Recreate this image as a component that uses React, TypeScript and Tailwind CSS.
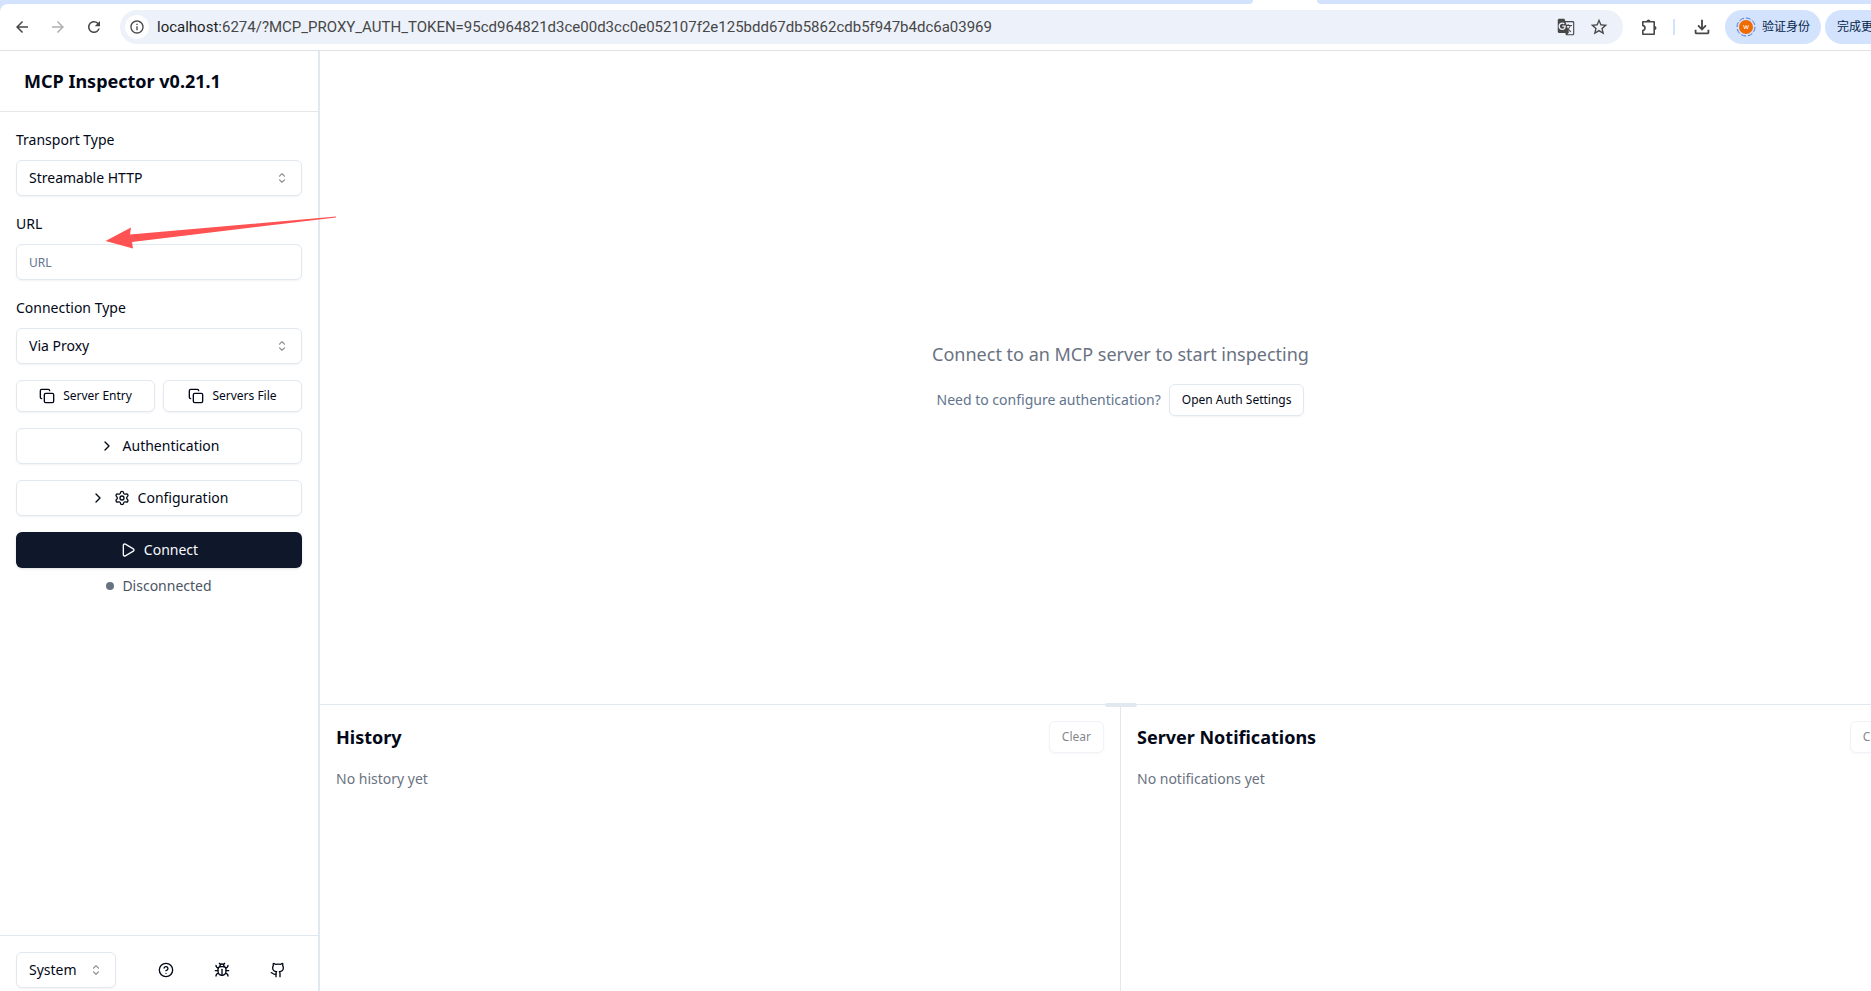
import { useState } from "react";
import type { ReactNode, SelectHTMLAttributes } from "react";
import { Bug, ChevronRight, CircleHelp, Copy, Github, Play, Settings } from "lucide-react";
import {
    MdArrowBack,
    MdArrowForward,
    MdGTranslate,
    MdInfoOutline,
    MdOutlineFileDownload,
    MdRefresh,
    MdStarOutline,
} from "react-icons/md";

const TOKEN = "95cd964821d3ce00d3cc0e052107f2e125bdd67db5862cdb5f947b4dc6a03969";

const outline = "rounded-md border border-slate-200 bg-white shadow-xs";

function SortIcon() {
    return (
        <svg
            viewBox="0 0 15 15"
            className="pointer-events-none col-start-1 row-start-1 mr-3 size-4 justify-self-end opacity-50"
            fill="none"
            stroke="currentColor"
            strokeLinecap="round"
            strokeLinejoin="round"
        >
            <path d="M5.2 5.8 7.5 3.5l2.3 2.3M5.2 9.2l2.3 2.3 2.3-2.3" />
        </svg>
    );
}

function PuzzleIcon() {
    return (
        <svg viewBox="0 0 20 20" className="size-5" fill="none" stroke="currentColor" strokeWidth="1.6">
            <path
                d="M3.8 4.8h11.4v12.4H3.8v-3.6c1.3-.3 2.2-1.3 2.2-2.6s-.9-2.3-2.2-2.6Z"
                strokeLinejoin="round"
            />
            <path d="M7.5 4.5a2 2 0 0 1 4 0ZM15.5 9a2 2 0 0 1 0 4Z" fill="currentColor" stroke="none" />
        </svg>
    );
}

function Select({ children, ...props }: SelectHTMLAttributes<HTMLSelectElement>) {
    return (
        <div className="grid items-center">
            <select
                {...props}
                className={`${outline} col-start-1 row-start-1 h-9 w-full appearance-none px-3 text-sm`}
            >
                {children}
            </select>
            <SortIcon />
        </div>
    );
}

function Field({ id, label, children }: { id: string; label: string; children: ReactNode }) {
    return (
        <div className="flex flex-col gap-2">
            <label htmlFor={id} className="text-sm leading-6">
                {label}
            </label>
            {children}
        </div>
    );
}

function BrowserBar() {
    return (
        <header className="bg-[#d3e3fd]">
            <div className="flex h-1 bg-white">
                <div className="w-[1253px] rounded-br-full bg-[#d3e3fd]" />
                <div className="ml-16 flex-1 rounded-bl-full bg-[#d3e3fd]" />
            </div>
            <div className="flex h-[47px] items-center rounded-tl-lg border-b border-[#dfe1e5] bg-white pl-3 text-[#474747]">
                <button aria-label="Back" className="mr-4 p-px">
                    <MdArrowBack size={18} />
                </button>
                <button aria-label="Forward" disabled className="mr-4 p-px text-[#b0b0b0]">
                    <MdArrowForward size={18} />
                </button>
                <button aria-label="Reload" className="mr-4 p-px">
                    <MdRefresh size={18} />
                </button>
                <div className="flex h-[34px] min-w-0 flex-1 items-center rounded-full bg-[#ecf1fa] pr-3.5 pl-[5px]">
                    <button
                        aria-label="Site information"
                        className="mr-2 flex size-6 items-center justify-center rounded-full bg-white"
                    >
                        <MdInfoOutline size={16} />
                    </button>
                    <p className="flex-1 truncate font-[Roboto,sans-serif] text-[15px]">
                        <span className="text-[#1f1f1f]">localhost:</span>
                        6274/?MCP_PROXY_AUTH_TOKEN={TOKEN}
                    </p>
                    <button aria-label="Translate" className="mr-3.5">
                        <MdGTranslate size={18} />
                    </button>
                    <button aria-label="Bookmark">
                        <MdStarOutline size={20} />
                    </button>
                </div>
                <button aria-label="Extensions" className="ml-4">
                    <PuzzleIcon />
                </button>
                <div className="mr-4 ml-3.5 h-4 w-0.5 bg-[#d3e3fd]" />
                <button aria-label="Downloads" className="mr-3">
                    <MdOutlineFileDownload size={22} />
                </button>
                <button className="flex h-[34px] w-24 items-center justify-center gap-1.5 rounded-full bg-[#d3e3fd] text-xs text-[#041e49]">
                    <svg viewBox="0 0 20 20" className="size-5">
                        <circle cx="10" cy="10" r="9" fill="none" stroke="#4f78c4" strokeDasharray="5 2" />
                        <circle cx="10" cy="10" r="7" fill="#f06a00" />
                        <path d="m7.5 8 1.2 4L10 8.5l1.3 3.5 1.2-4" fill="none" stroke="#fff" strokeWidth=".8" />
                    </svg>
                    验证身份
                </button>
                <button className="ml-1 h-[34px] w-24 rounded-full bg-[#d3e3fd] pl-3 text-left text-xs whitespace-nowrap text-[#041e49]">
                    完成更新
                </button>
            </div>
        </header>
    );
}

function Sidebar() {
    const [url, setUrl] = useState("");

    return (
        <aside className="flex w-80 shrink-0 flex-col border-r-2 border-slate-200">
            <div className="border-b border-gray-200 p-4">
                <h1 className="ml-2 text-lg font-bold">MCP Inspector v0.21.1</h1>
            </div>

            <div className="flex flex-1 flex-col gap-4 p-4">
                <Field id="transport" label="Transport Type">
                    <Select id="transport" defaultValue="http">
                        <option value="stdio">STDIO</option>
                        <option value="sse">SSE</option>
                        <option value="http">Streamable HTTP</option>
                    </Select>
                </Field>
                <Field id="url" label="URL">
                    <input
                        id="url"
                        value={url}
                        onChange={(e) => setUrl(e.target.value)}
                        placeholder="URL"
                        className={`${outline} h-9 px-3 text-xs placeholder:text-slate-500`}
                    />
                </Field>
                <Field id="connection" label="Connection Type">
                    <Select id="connection" defaultValue="proxy">
                        <option value="proxy">Via Proxy</option>
                        <option value="direct">Direct</option>
                    </Select>
                </Field>

                <div className="grid grid-cols-2 gap-2">
                    <button className={`${outline} flex h-8 items-center justify-center gap-2 text-xs`}>
                        <Copy size={16} />
                        Server Entry
                    </button>
                    <button className={`${outline} flex h-8 items-center justify-center gap-2 text-xs`}>
                        <Copy size={16} />
                        Servers File
                    </button>
                </div>

                <button className={`${outline} flex h-9 items-center justify-center gap-2 text-sm`}>
                    <ChevronRight size={16} />
                    Authentication
                </button>
                <button className={`${outline} flex h-9 items-center justify-center gap-2 text-sm`}>
                    <ChevronRight size={16} />
                    <Settings size={16} />
                    Configuration
                </button>

                <div className="flex flex-col gap-2">
                    <button className="flex h-9 items-center justify-center gap-2 rounded-md bg-slate-900 text-sm text-slate-50 shadow-sm">
                        <Play size={16} />
                        Connect
                    </button>
                    <div className="flex items-center justify-center gap-2 text-sm text-gray-600">
                        <span className="size-2 rounded-full bg-gray-500" />
                        Disconnected
                    </div>
                </div>
            </div>

            <div className="flex items-center justify-between border-t border-slate-200 p-4">
                <div className="w-[100px]">
                    <Select aria-label="Theme" defaultValue="system">
                        <option value="system">System</option>
                        <option value="light">Light</option>
                        <option value="dark">Dark</option>
                    </Select>
                </div>
                <nav className="flex gap-2">
                    <a href="#docs" aria-label="Documentation" className="px-4 py-2">
                        <CircleHelp size={16} />
                    </a>
                    <a href="#debug" aria-label="Debugging guide" className="px-4 py-2">
                        <Bug size={16} />
                    </a>
                    <a href="#github" aria-label="GitHub" className="px-4 py-2">
                        <Github size={16} />
                    </a>
                </nav>
            </div>
        </aside>
    );
}

function LogPanel({ title, empty }: { title: string; empty: string }) {
    return (
        <div className="p-4">
            <div className="mb-4 flex items-center justify-between">
                <h2 className="text-lg font-bold">{title}</h2>
                <button disabled className={`${outline} h-8 px-3 text-xs opacity-50`}>
                    Clear
                </button>
            </div>
            <p className="text-sm text-gray-500">{empty}</p>
        </div>
    );
}

export default function App() {
    return (
        <div className="relative h-screen overflow-hidden bg-white font-['Noto_Sans','Noto_Sans_CJK_SC',sans-serif] text-[#020817]">
            <div className="flex h-[calc(100%+13px)] w-[calc(100%+50px)] flex-col">
                <BrowserBar />
                <div className="flex min-h-0 flex-1">
                    <Sidebar />
                    <main className="flex flex-1 flex-col">
                        <section className="flex flex-1 flex-col items-center justify-center gap-4">
                            <p className="text-lg text-gray-500">Connect to an MCP server to start inspecting</p>
                            <div className="flex items-center gap-2">
                                <p className="text-sm text-slate-500">Need to configure authentication?</p>
                                <button className={`${outline} h-8 px-3 text-xs`}>Open Auth Settings</button>
                            </div>
                        </section>
                        <section className="relative flex h-[300px] border-t border-slate-200">
                            <div className="absolute -top-0.5 left-1/2 h-1 w-8 -translate-x-1/2 cursor-row-resize rounded-full bg-slate-200" />
                            <div className="flex-1 border-r border-slate-200">
                                <LogPanel title="History" empty="No history yet" />
                            </div>
                            <div className="flex-1">
                                <LogPanel title="Server Notifications" empty="No notifications yet" />
                            </div>
                        </section>
                    </main>
                </div>
            </div>

            <svg viewBox="0 0 232 34" className="pointer-events-none absolute top-[216px] left-[105px] h-[34px] w-[232px]">
                <path d="M0.5 25 26 11.5 25 18.5 231 0.5V1.5L27 26 28 32.5Z" fill="#ff5252" />
            </svg>
        </div>
    );
}
